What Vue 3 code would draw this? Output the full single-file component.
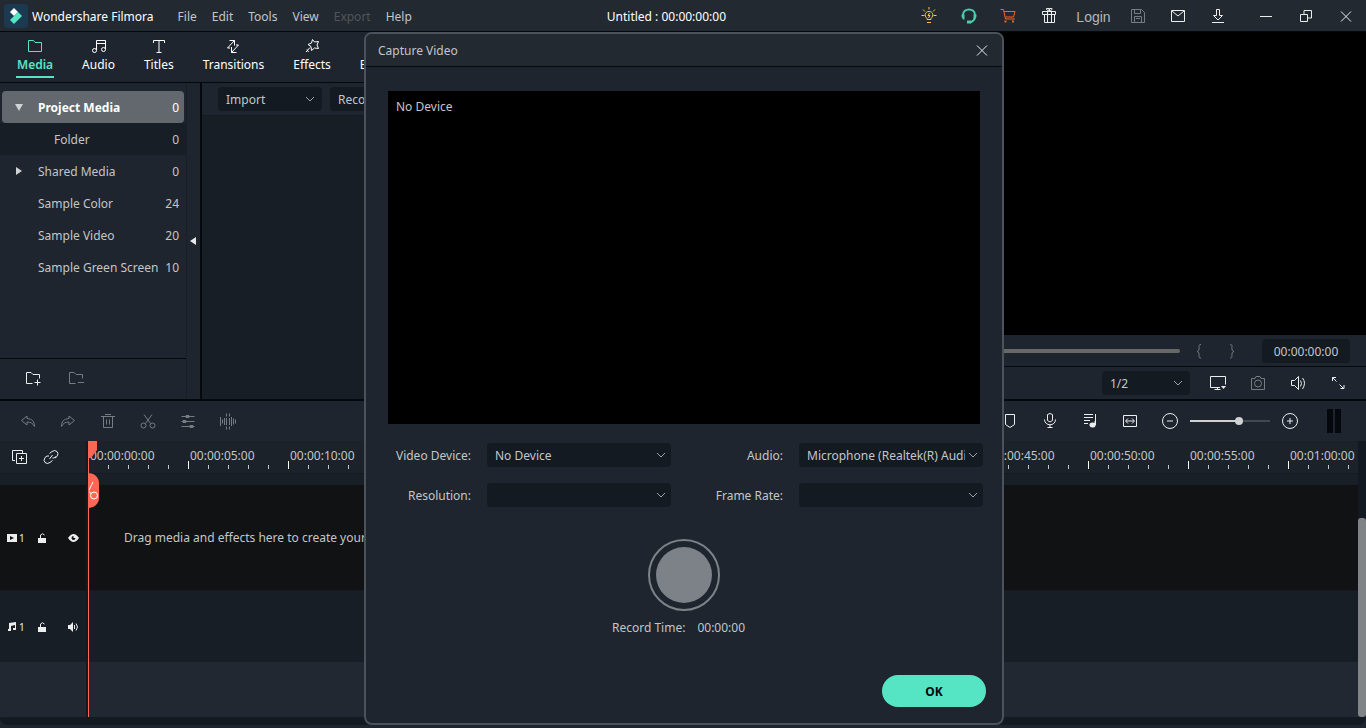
<script setup>
import { h, ref } from 'vue'

const icons = {
  bulb: 'M8 13.500v-1c-3.500-3.500-1.500-7 2-7s5.500 3.500 2 7v1zM8 16.500h4M10 1v2.500M2.500 9.500h3M14.500 9.500h3M4 3.500l2 2M16 3.500l-2 2M10.500 7l-1.500 2.500h2l-1.500 2.500',
  cart: 'M1.500 3.500h3l2 9.500h9.500M5 5.500h11l-1.500 5.500h-8',
  gift: 'M3.500 5.500h13v3h-13zM5.500 8.500v8h10v-8M8.500 5.500v11M12.500 5.500v11M10 5.500l-2.500-2v-1h2.500zM10.500 5.500l2.500-2v-1h-2.500z',
  save: 'M3.500 3.500h10l3 3v10h-13zM6.500 3.500v4h6v-4M6.500 16.500v-6h7v6M8 12.500h4',
  mail: 'M3.500 4.500h13v11h-13zM4 5l6 5l6-5',
  download: 'M8.500 3.500h3v6h3l-4.500 4.500l-4.500-4.500h3zM4 16.500h12',
  min: 'M4 10.500h12',
  restore: 'M4.500 8.500h7v7h-7zM8 8v-3.500h7.500v7.500h-4',
  close: 'M5 5.500l10 10M15 5.500l-10 10',
  folder: 'M3.500 4.500h5l1.500 2h6.500v9h-13z',
  note: 'M7.500 14v-9.500h9v8.500M7.500 7.500h9M7.500 14.500a2 2 0 1 1-4 0a2 2 0 1 1 4 0M16.500 13.500a2 2 0 1 1-4 0a2 2 0 1 1 4 0',
  title: 'M4.500 7v-2.500h11v2.500M10 4.500v12M7.500 16.500h5',
  transition: 'M6.500 4.500h5v5M11.500 4.500l-7 7.500h2.500M8.500 11v5.500h5M8.500 16.500l7-7.500h-2.500',
  effect: 'M10.500 3.500l2 2.500l4-.5l-1.500 3.500l1.500 3.500l-4-.5l-3 2.500l-.5-4l-3-2l3.500-1.500zM8 11.500l-4 4.500M5 13.500l1.500 2.500',
  folderAdd: 'M9.500 14.500h-6v-11h4.500l2 2h6.500v4M14.500 10.500v6M11.500 13.500h6',
  folderMinus: 'M9.500 14.500h-6v-11h4.500l2 2h6.500v4M12 13.500h6',
  undo: 'M9 5l-5.500 4.500l5.500 4.500v-3c4 0 6 1.500 7.500 4.500c0-5-2-7.500-7.500-8z',
  redo: 'M11 5l5.500 4.500l-5.500 4.500v-3c-4 0-6 1.500-7.500 4.500c0-5 2-7.500 7.500-8z',
  trash: 'M3 5.500h14M7 3.500h6M5.500 5.500v11h9v-11M8.500 8.500v5M11.500 8.500v5',
  scissors: 'M6 3.500l6.500 9M14 3.500l-6.500 9M8 14.500a2.500 2.500 0 1 1-5 0a2.500 2.500 0 1 1 5 0M17 14.500a2.500 2.500 0 1 1-5 0a2.500 2.500 0 1 1 5 0',
  sliders: 'M3.500 5.500h13M3.500 10.500h13M3.500 15.500h13M8 4.500h3v2h-3zM5 9.500h3v2h-3zM12 14.500h3v2h-3z',
  wave: 'M2.500 6v9M4.500 8.500v4M6.500 7v7M8.500 2.500v3M8.500 7v7M8.500 15.500v3M11.500 2.500v3M11.500 7v7M11.500 15.500v3M13.500 6v9M15.500 7.500v6M17.500 8.500v4',
  addTrack: 'M6 13.500h-2.500v-10h10v3M7.500 6.500h10v10h-10zM12.500 9v5M10 11.500h5',
  link: 'M8.500 6.500l2.500-2q3-2 5 0t0 5l-2 1.500M15 9.500l-2 1.500h-1.500M11.500 13.500l-2.500 2q-3 2-5 0t0-5l2-1.500h2M8.500 12l3-4',
  marker: 'M5.500 3.500h9v10l-4.500 3l-4.500-3z',
  mic: 'M7.500 3.500q2.500-2 5 0v6q-2.500 3-5 0zM4.500 8.500c0 7 11 7 11 0M10 14v3M7.500 16.500h5',
  playlist: 'M4 3.500h9M4 6.500h9M4 9.500h6M4 12.500h4M15.500 3v11',
  fit: 'M3.500 4.500h13v11h-13zM6 10h8M8 7.500l-2.500 2.500l2.500 2.500M12 7.500l2.500 2.500l-2.500 2.500',
  minus: 'M17.500 10a7.500 7.500 0 1 1-15 0a7.500 7.500 0 1 1 15 0M7 10h6',
  plus: 'M17.500 10a7.500 7.500 0 1 1-15 0a7.500 7.500 0 1 1 15 0M7 10h6M10 7v6',
  monitor: 'M12 14.500h-9.500v-11h15v8M9.500 14.500v2M6.500 16.500h6',
  camera: 'M3.500 5.500h3.500l1-2h4l1 2h3.500v11h-13zM13.500 10.500a3.500 3.500 0 1 1-7 0a3.500 3.500 0 1 1 7 0',
  speaker: 'M3.500 7.500h3l4-4v13l-4-4h-3zM12.500 7.500q2 3 0 6M14.500 5q4 5 0 11',
  expand: 'M4.500 8v-3.500h3.500M4.500 4.500l4 4M16 12v3.500h-3.500M15.500 15.500l-4-4',
  brace: 'M12 3.500c-3 0-1.500 2-2 4.500c0 1.500-.5 2-2 2.500c1.500.5 2 1 2 2.500c.5 2.500-1 4 2 4',
  braceEnd: 'M8 3.500c3 0 1.500 2 2 4.500c0 1.500.5 2 2 2.500c-1.500.5-2 1-2 2.500c-.5 2.500 1 4-2 4',
  headset: 'M4 9c0-7.500 12-7.500 12 0M16 12q-1 3-5 4.500'
}
const solids = {
  cart: 'M5.500 14.500h2v2h-2zM13 14.500h2v2h-2z',
  headset: 'M2.500 8.500h3v5h-1.500q-2-2-1.500-5M17.500 8.500h-3v5h1.500q2-2 1.500-5M8 14.500h4v3h-4z',
  playlist: 'M15.500 13.500a3 2.500 0 1 1-6 1a3 2.500 0 1 1 6-1M14.500 10h1.500v4h-1.500z',
  monitor: 'M13 13h5l-2.500 3z'
}
const Icon = ({ name }) =>
  h('svg', { width: 20, height: 20, viewBox: '0 0 20 20', 'aria-hidden': 'true' }, [
    h('path', { d: icons[name], fill: 'none', stroke: 'currentColor' }),
    solids[name] ? h('path', { d: solids[name], fill: 'currentColor' }) : null
  ])
Icon.props = ['name']

const menus = ['File', 'Edit', 'Tools', 'View', 'Export', 'Help']
const tabs = [
  { label: 'Media', icon: 'folder' },
  { label: 'Audio', icon: 'note' },
  { label: 'Titles', icon: 'title' },
  { label: 'Transitions', icon: 'transition' },
  { label: 'Effects', icon: 'effect' },
  { label: 'Elements', icon: 'effect' }
]
const folders = [
  { label: 'Project Media', count: 0, kind: 'selected', arrow: '0 1 8 1 4 8' },
  { label: 'Folder', count: 0, kind: 'child' },
  { label: 'Shared Media', count: 0, arrow: '1 0 7 4 1 8' },
  { label: 'Sample Color', count: 24 },
  { label: 'Sample Video', count: 20 },
  { label: 'Sample Green Screen', count: 10 }
]
const editTools = ['undo', 'redo', 'trash', 'scissors', 'sliders', 'wave']
const markTools = ['marker', 'mic', 'playlist', 'fit', 'minus']
const marks = Array.from({ length: 13 }, (_, i) => {
  const s = i * 5
  return `00:${String(Math.floor(s / 60)).padStart(2, '0')}:${String(s % 60).padStart(2, '0')}:00`
})
const zoom = ref(62)
const position = ref(0)
</script>

<template>
  <div class="app">
    <header class="titlebar">
      <svg class="logo" width="24" height="24" viewBox="0 0 24 24" aria-hidden="true">
        <rect width="24" height="24" rx="4" fill="#1b3a52" />
        <path d="M10 4l4 4l-4 4l-4-4z" fill="#fff" />
        <path d="M14 8l4 4l-8 8l-4-4z" fill="#55e5c5" />
      </svg>
      <span class="brand">Wondershare Filmora</span>
      <nav class="menus">
        <button v-for="m in menus" :key="m" :disabled="m === 'Export'">{{ m }}</button>
      </nav>
      <span class="project">Untitled : 00:00:00:00</span>
      <div class="actions">
        <button class="tool yellow" aria-label="Tips"><Icon name="bulb" /></button>
        <button class="tool mint" aria-label="Support"><Icon name="headset" class="heavy" /></button>
        <button class="tool orange" aria-label="Store"><Icon name="cart" /></button>
        <button class="tool" aria-label="Gifts"><Icon name="gift" /></button>
        <button class="login">Login</button>
        <button class="tool dim" aria-label="Save"><Icon name="save" /></button>
        <button class="tool" aria-label="Messages"><Icon name="mail" /></button>
        <button class="tool" aria-label="Downloads"><Icon name="download" /></button>
        <div class="window-controls">
          <button class="tool" aria-label="Minimize"><Icon name="min" /></button>
          <button class="tool" aria-label="Restore"><Icon name="restore" /></button>
          <button class="tool" aria-label="Close"><Icon name="close" /></button>
        </div>
      </div>
    </header>

    <main class="workspace">
      <section class="library">
        <nav class="tabs">
          <button v-for="(t, i) in tabs" :key="t.label" :class="{ active: i === 0 }">
            <Icon :name="t.icon" /><span>{{ t.label }}</span>
          </button>
        </nav>
        <div class="media">
          <aside class="side">
            <ul>
              <li v-for="f in folders" :key="f.label" :class="f.kind">
                <svg width="8" height="8" viewBox="0 0 8 8" aria-hidden="true">
                  <polygon v-if="f.arrow" :points="f.arrow" fill="#d0d2d4" />
                </svg>
                <span class="name">{{ f.label }}</span>
                <span class="count">{{ f.count }}</span>
              </li>
            </ul>
            <div class="side-foot">
              <button aria-label="New folder"><Icon name="folderAdd" /></button>
              <button class="dim" aria-label="Delete folder"><Icon name="folderMinus" /></button>
            </div>
          </aside>
          <button class="collapse" aria-label="Collapse panel">
            <svg width="6" height="8" viewBox="0 0 6 8"><path d="M6 0v8l-6-4z" fill="#e8e9ea" /></svg>
          </button>
          <div class="bin">
            <div class="bin-bar">
              <div class="field import">
                <select aria-label="Import"><option>Import</option></select>
                <svg width="10" height="6" viewBox="0 0 10 6"><path d="M1 1l4 4l4-4" /></svg>
              </div>
              <div class="field import">
                <select aria-label="Record"><option>Record</option></select>
                <svg width="10" height="6" viewBox="0 0 10 6"><path d="M1 1l4 4l4-4" /></svg>
              </div>
            </div>
          </div>
        </div>
      </section>

      <section class="preview">
        <div class="screen"></div>
        <div class="transport">
          <input v-model="position" class="seek" type="range" aria-label="Playback position" />
          <button class="brace" aria-label="Mark in"><Icon name="brace" /></button>
          <button class="brace" aria-label="Mark out"><Icon name="braceEnd" /></button>
          <span class="clock">00:00:00:00</span>
        </div>
        <div class="quality">
          <div class="field ratio">
            <select aria-label="Playback quality"><option>1/2</option></select>
            <svg width="10" height="6" viewBox="0 0 10 6"><path d="M1 1l4 4l4-4" /></svg>
          </div>
          <div class="view-tools">
            <button class="tool" aria-label="Display"><Icon name="monitor" /></button>
            <button class="tool dim" aria-label="Snapshot"><Icon name="camera" /></button>
            <button class="tool" aria-label="Volume"><Icon name="speaker" /></button>
            <button class="tool" aria-label="Full screen"><Icon name="expand" /></button>
          </div>
        </div>
      </section>
    </main>

    <section class="editbar">
      <button v-for="t in editTools" :key="t" class="tool dim" :aria-label="t"><Icon :name="t" /></button>
      <span class="spacer"></span>
      <button v-for="t in markTools" :key="t" class="tool" :aria-label="t"><Icon :name="t" /></button>
      <input
        v-model="zoom" class="zoom" type="range" aria-label="Timeline zoom"
        :style="{ '--fill': zoom + '%' }"
      />
      <button class="tool" aria-label="Zoom in"><Icon name="plus" /></button>
      <div class="meter"><i></i><i></i></div>
    </section>

    <section class="timeline">
      <div class="heads">
        <div class="head-tools">
          <button aria-label="Add track"><Icon name="addTrack" /></button>
          <button aria-label="Link"><Icon name="link" /></button>
        </div>
        <div class="strip"></div>
        <div class="head video">
          <span class="tag">
            <svg width="10" height="8" viewBox="0 0 10 8"><path d="M0 0h10v8h-10zM3 2v4l4-2z" fill="currentColor" fill-rule="evenodd" /></svg>1
          </span>
          <svg width="8" height="10" viewBox="0 0 8 10"><path d="M0 5h8v5h-8z" fill="currentColor" /><path d="M2.500 5v-3q2-2.500 4 0" fill="none" stroke="currentColor" /></svg>
          <svg width="11" height="8" viewBox="0 0 11 8"><path d="M0 4q5.500-8 11 0q-5.500 8-11 0M5.500 2a2 2 0 1 0 2 2h-2z" fill="currentColor" fill-rule="evenodd" /></svg>
        </div>
        <div class="head audio">
          <span class="tag">
            <svg width="10" height="10" viewBox="0 0 10 10"><path d="M2 1l7-1v8h-3v-2h2v-3l-4 1v5h-3v-2h1z" fill="currentColor" /></svg>1
          </span>
          <svg width="8" height="10" viewBox="0 0 8 10"><path d="M0 5h8v5h-8z" fill="currentColor" /><path d="M2.500 5v-3q2-2.500 4 0" fill="none" stroke="currentColor" /></svg>
          <svg width="11" height="10" viewBox="0 0 11 10"><path d="M0 3h2l3-3v10l-3-3h-2z" fill="currentColor" /><path d="M6.500 3v4M8 1.500q3 3.500 0 7" fill="none" stroke="currentColor" /></svg>
        </div>
        <div class="rest"></div>
      </div>
      <div class="lanes">
        <div class="ruler">
          <div v-for="m in marks" :key="m" class="mark">
            <span>{{ m }}</span>
            <div class="ticks"><i></i><i></i><i></i><i></i><i></i></div>
          </div>
        </div>
        <div class="strip"></div>
        <div class="lane video">Drag media and effects here to create your video.</div>
        <div class="lane audio"></div>
        <div class="rest"></div>
        <svg class="playhead" width="12" height="68" viewBox="0 0 12 68" aria-hidden="true">
          <path d="M0 0h9v9l-6 8h-3zM0 32c6 0 11 4 11 10v15c0 6-5 10-11 10z" fill="#ff6655" />
          <path d="M5 41l-4.500 9l3 3M9.500 54.500a3.500 3.500 0 1 1-7 0a3.500 3.500 0 1 1 7 0" fill="none" stroke="#fff" />
        </svg>
      </div>
      <div class="scroll"><i></i></div>
    </section>
    <footer class="base"><div></div></footer>

    <div class="dialog" role="dialog" aria-labelledby="dialog-title">
      <div class="dialog-head">
        <span id="dialog-title">Capture Video</span>
        <button class="tool" aria-label="Close dialog"><Icon name="close" /></button>
      </div>
      <div class="dialog-body">
        <div class="camera">No Device</div>
        <form class="form" @submit.prevent>
          <label for="video-device">Video Device:</label>
          <div class="field">
            <select id="video-device"><option>No Device</option></select>
            <svg width="10" height="6" viewBox="0 0 10 6"><path d="M1 1l4 4l4-4" /></svg>
          </div>
          <label for="audio-device">Audio:</label>
          <div class="field">
            <select id="audio-device"><option>Microphone (Realtek(R) Audio)</option></select>
            <svg width="10" height="6" viewBox="0 0 10 6"><path d="M1 1l4 4l4-4" /></svg>
          </div>
          <label for="resolution">Resolution:</label>
          <div class="field">
            <select id="resolution"><option></option></select>
            <svg width="10" height="6" viewBox="0 0 10 6"><path d="M1 1l4 4l4-4" /></svg>
          </div>
          <label for="frame-rate">Frame Rate:</label>
          <div class="field">
            <select id="frame-rate"><option></option></select>
            <svg width="10" height="6" viewBox="0 0 10 6"><path d="M1 1l4 4l4-4" /></svg>
          </div>
        </form>
        <button class="record" aria-label="Record"><i></i></button>
        <div class="time"><span>Record Time:</span><span>00:00:00</span></div>
      </div>
      <div class="dialog-foot"><button class="ok">OK</button></div>
    </div>
  </div>
</template>

<style>
body { background: #1e252e; }
</style>

<style scoped>
.app {
  position: relative;
  display: flex;
  flex-direction: column;
  height: 100vh;
  min-height: 728px;
  overflow: hidden;
  background: #1e252e;
  color: #c3c6c9;
  font: 12px/16px "Noto Sans", "Open Sans", sans-serif;
}
.app * { box-sizing: border-box; }
button, select, input { margin: 0; padding: 0; border: 0; background: none; color: inherit; font: inherit; }
svg { display: block; flex: none; }
ul { margin: 0; padding: 0; list-style: none; }

.tool { display: flex; flex: none; align-items: center; justify-content: center; width: 40px; height: 24px; color: #eceded; }
.dim { color: #777c82; }
.yellow { color: #f6c54d; }
.mint { color: #45cfae; }
.orange { color: #ff5f1f; }
.heavy { stroke-width: 2px; }

.titlebar { display: flex; flex: none; align-items: center; height: 32px; padding-left: 4px; border-bottom: 1px solid #05080c; background: #222931; }
.brand, .menus, .project, .name, .count, label, #dialog-title { padding-top: 2px; }
.brand { margin-left: 4px; color: #fff; }
.menus { display: flex; gap: 15px; margin: 0 12px 0 24px; }
.menus button:disabled { color: #50565e; }
.project { margin: 0 auto; color: #fff; }
.actions { display: flex; align-items: center; }
.login { width: 49px; padding-top: 2px; color: #b4b7ba; font: 14px/20px "Liberation Sans", sans-serif; }
.window-controls { display: flex; margin-left: 8px; }

.workspace { display: grid; flex: 1; grid-template-columns: 1fr 1fr; min-height: 0; border-bottom: 2px solid #05080c; }
.library { display: flex; flex-direction: column; min-width: 0; }
.tabs { display: flex; flex: none; gap: 27px; height: 51px; padding-left: 16px; border-bottom: 1px solid #05080c; }
.tabs button { display: flex; flex-direction: column; gap: 1px; align-items: center; height: 46px; padding: 4px 1px 0; color: #fff; }
.tabs .active { border-bottom: 2px solid #55e5c5; color: #55e5c5; font-weight: 600; }
.media { display: flex; flex: 1; min-height: 0; }
.side { display: flex; flex: none; flex-direction: column; justify-content: space-between; width: 187px; padding-top: 8px; border-right: 1px solid #181e25; }
.side li { display: flex; align-items: center; height: 32px; padding: 0 7px 0 15px; }
.side .name { flex: 1; margin-left: 15px; white-space: nowrap; }
.side .selected { margin: 0 2px; padding: 0 5px 0 13px; border-radius: 4px; background: #62686e; color: #fff; }
.side .selected .name { font-weight: 700; }
.side .child { background: #181e25; }
.side .child .name { margin-left: 31px; }
.side-foot { display: flex; gap: 23px; align-items: center; height: 41px; padding-left: 23px; border-top: 1px solid #05080c; color: #eceded; }
.side-foot .dim { color: #777c82; }
.collapse { flex: none; width: 13px; padding-left: 3px; }
.bin { flex: 1; min-width: 0; border-left: 2px solid #05080c; background: #181e25; }
.bin-bar { display: flex; gap: 8px; padding: 4px 16px; border-bottom: 1px solid #141a21; background: #1e252e; }

.field { position: relative; flex: none; height: 24px; border-radius: 4px; background: #131a22; }
.field select { width: 100%; height: 24px; padding: 1px 18px 0 8px; appearance: none; outline: 0; }
.field option { background: #131a22; }
.field svg { position: absolute; top: 9px; right: 5px; fill: none; stroke: #9ea2a6; pointer-events: none; }
.import { width: 104px; }
.import svg, .ratio svg { right: 7px; }
.ratio { width: 88px; }

.preview { display: flex; flex-direction: column; min-width: 0; }
.screen { flex: 1; background: #000; }
.transport { display: flex; flex: none; align-items: center; height: 32px; padding-right: 16px; border-bottom: 1px solid #05080c; }
.seek { flex: 1; height: 4px; border-radius: 2px; background: #6a6767; appearance: none; }
.seek::-webkit-slider-thumb { width: 8px; height: 8px; border-radius: 4px; background: #c9cbcd; appearance: none; }
.brace { width: 33px; padding-left: 9px; color: #777c82; }
.clock { width: 88px; margin-left: 16px; padding: 5px 0 3px; border-radius: 4px; background: #131a22; text-align: center; }
.quality { display: flex; flex: none; align-items: center; justify-content: flex-end; height: 32px; padding-right: 8px; }
.view-tools { display: flex; margin-left: 8px; }

.editbar { display: flex; flex: none; align-items: center; height: 40px; padding-left: 8px; }
.spacer { flex: 1; }
.zoom { width: 80px; height: 2px; background: linear-gradient(to right, #cfd1d3 var(--fill), #42484f var(--fill)); appearance: none; }
.zoom::-webkit-slider-thumb { width: 8px; height: 8px; border-radius: 4px; background: #cfd1d3; appearance: none; }
.meter { display: flex; gap: 2px; width: 56px; height: 24px; padding-left: 17px; }
.meter i { width: 6px; background: #05080c; }

.timeline { display: flex; flex: none; background: #181e25; }
.heads { flex: none; width: 88px; border-right: 2px solid #151a21; }
.head-tools { display: flex; gap: 12px; height: 32px; padding-left: 9px; background: #1b222a; color: #eceded; }
.strip { height: 12px; border-top: 1px solid #141a21; background: #181f27; }
.head { display: flex; align-items: center; padding-left: 7px; color: #eceded; font-size: 10px; }
.tag { display: flex; gap: 2px; align-items: center; width: 31px; }
.head > svg:last-child { margin-left: 22px; }
.video { height: 106px; border-bottom: 1px solid #141a20; background: #111214; }
.audio { height: 71px; background: #181e25; }
.rest { height: 55px; background: #222831; }
.lanes { position: relative; flex: 1; min-width: 0; overflow: hidden; }
.ruler { display: flex; height: 32px; overflow: hidden; background: #1b222a; }
.mark { flex: none; width: 100px; padding-top: 7px; }
.mark span { display: block; height: 13px; padding-left: 2px; }
.ticks { display: grid; grid-template-columns: repeat(5, 1fr); align-items: end; height: 8px; }
.ticks i { width: 1px; height: 4px; background: #c3c6c9; }
.ticks i:first-child { height: 8px; background: #fff; }
.lane { display: flex; align-items: center; padding-left: 36px; white-space: nowrap; }
.playhead { position: absolute; top: 0; left: 0; }
.lanes::after { position: absolute; top: 0; bottom: 0; left: 0; width: 1px; background: #ff6655; content: ""; }
.scroll { display: flex; flex: none; align-items: flex-end; width: 8px; background: #131920; }
.scroll i { width: 8px; height: 72%; border-radius: 3px; background: #808486; }
.base { flex: none; height: 11px; }
.base div { height: 8px; border-radius: 0 0 8px 8px; background: #131a22; }

.dialog { position: absolute; top: 32px; left: calc(50% - 319px); width: 640px; border: 2px solid #4b525c; border-radius: 8px; background: #1e252e; }
.dialog-head { display: flex; align-items: center; justify-content: space-between; height: 33px; padding-left: 12px; border-bottom: 1px solid #05080c; border-radius: 6px 6px 0 0; background: #222931; }
.dialog-body { padding: 24px 19px 0 22px; }
.camera { width: 592px; aspect-ratio: 16 / 9; padding: 8px; background: #000; }
.form { display: grid; grid-template-columns: 99px 184px 128px 184px; row-gap: 16px; align-items: center; margin-top: 19px; }
.form label { padding-right: 16px; text-align: right; white-space: nowrap; }
.record { display: grid; place-items: center; width: 72px; height: 72px; margin: 32px 263px 0 auto; border: 2px solid #7d8188; border-radius: 50%; }
.record i { width: 56px; height: 56px; border-radius: 50%; background: #7d8188; }
.time { display: flex; gap: 12px; justify-content: center; margin-top: 9px; padding-right: 14px; }
.dialog-foot { display: flex; justify-content: flex-end; padding: 39px 16px 16px; }
.ok { width: 104px; height: 32px; padding-top: 1px; border-radius: 16px; background: #55e5c5; color: #05080c; font-weight: 700; }
</style>
